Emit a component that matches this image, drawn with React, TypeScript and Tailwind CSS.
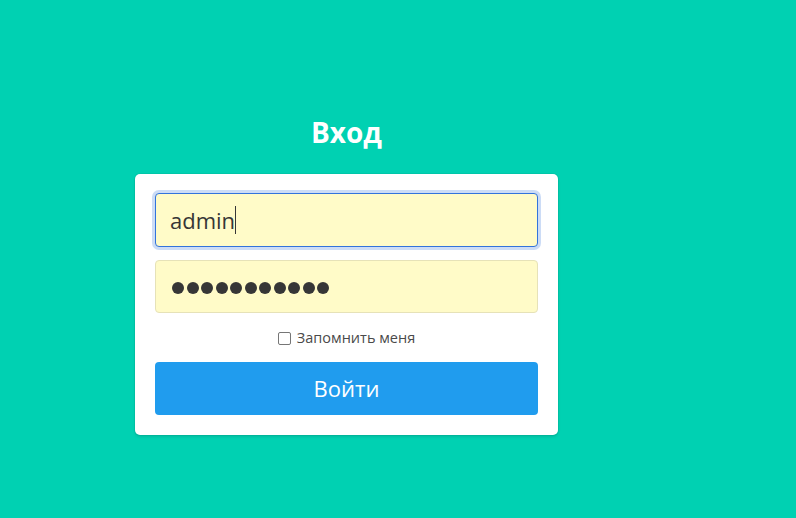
import React from "react";

export default function App() {
  return (
    <div
      className="w-[796px] h-[518px] bg-[#00d1b2] overflow-hidden"
      style={{ fontFamily: '"Open Sans", "Noto Sans", sans-serif' }}
    >
      <div className="ml-[135px] w-[423px] pt-[112px] flex flex-col items-center">
        <h3 className="text-white font-bold text-[28px] leading-[40px] mb-[22px]">
          Вход
        </h3>
        <div className="w-full bg-white rounded-[5px] shadow-[0_2px_3px_rgba(10,10,10,0.1),0_0_0_1px_rgba(10,10,10,0.05)] px-[20px] pt-[19px] pb-[20px] flex flex-col">
          <div className="h-[54px] rounded-[4px] border border-[#3273dc] bg-[#fffbc8] shadow-[0_0_0_3px_rgba(50,115,220,0.25)] flex items-center pl-[14px] text-[22px] text-[#363636]">
            <span>admin</span>
            <span className="w-px h-[28px] bg-[#363636]" />
          </div>
          <div className="mt-[13px] h-[53px] rounded-[4px] border border-[#e6e2b8] bg-[#fffbc8] flex items-center pl-[16px] text-[#363636]">
            <div className="flex gap-[2.5px] mt-[3px]">
              {Array.from({ length: 11 }).map((_, i) => (
                <span key={i} className="w-[12px] h-[12px] rounded-full bg-[#363636]" />
              ))}
            </div>
          </div>
          <div className="mt-[15px] h-[20px] flex items-center justify-center gap-[6px] text-[14.5px] text-[#4a4a4a]">
            <span className="w-[13px] h-[13px] rounded-[2px] border-[1.5px] border-[#767676] bg-white" />
            <span>Запомнить меня</span>
          </div>
          <button className="mt-[14px] h-[53px] rounded-[4px] bg-[#209cee] text-white text-[22px] flex items-center justify-center">
            Войти
          </button>
        </div>
      </div>
    </div>
  );
}
